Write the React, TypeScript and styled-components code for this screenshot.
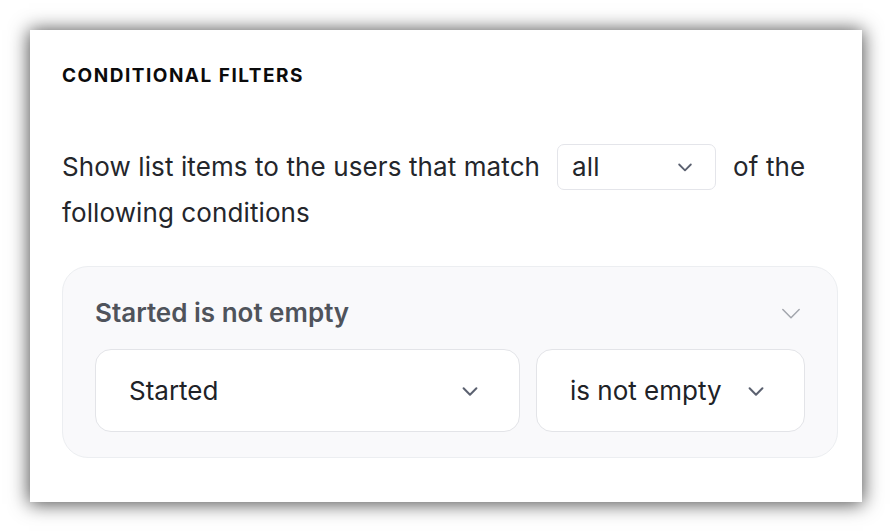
import React from "react";
import styled, { createGlobalStyle } from "styled-components";

const Global = createGlobalStyle`
  html, body { margin: 0; padding: 0; background: #ffffff; }
  body {
    font-family: Inter, "Noto Sans", sans-serif;
    -webkit-font-smoothing: antialiased;
  }
`;

const Page = styled.div`
  padding: 30px;
  width: 892px;
  height: 532px;
  box-sizing: border-box;
`;

const Card = styled.section`
  width: 832px;
  height: 472px;
  box-sizing: border-box;
  background: #ffffff;
  box-shadow: 0 1px 18px 1px rgba(0, 0, 0, 0.7);
  padding: 32px 24px 0 32px;
`;

const Title = styled.h2`
  margin: 0;
  font-size: 19px;
  line-height: 28px;
  font-weight: 700;
  letter-spacing: 1.5px;
  color: #0b0b0c;
`;

const Sentence = styled.div`
  margin-top: 54px;
  font-size: 26px;
  line-height: 46px;
  letter-spacing: 0.1px;
  color: #24262b;
  width: 770px;
`;

const InlineSelect = styled.span`
  display: inline-flex;
  align-items: center;
  justify-content: space-between;
  box-sizing: border-box;
  width: 159px;
  height: 46px;
  padding: 0 20px 0 14px;
  margin: -6px 17px -6px 17px;
  vertical-align: middle;
  border: 1.5px solid #e4e5ea;
  border-radius: 7px;
  background: #ffffff;
  line-height: 1;
  position: relative;
  top: -2px;
`;

const Group = styled.div`
  margin-top: 30px;
  width: 776px;
  box-sizing: border-box;
  background: #f9f9fb;
  border: 1.5px solid #eceef1;
  border-radius: 26px;
  padding: 26px 32px 25px 32px;
`;

const GroupHeader = styled.div`
  display: flex;
  align-items: center;
  justify-content: space-between;
  height: 39px;
  margin-bottom: 17px;
`;

const GroupTitle = styled.span`
  font-size: 26px;
  font-weight: 600;
  color: #4f535b;
`;

const Row = styled.div`
  display: flex;
  gap: 16px;
`;

const Select = styled.div<{ $w: number; $gap?: number }>`
  display: flex;
  align-items: center;
  justify-content: ${(p) => (p.$gap ? "flex-start" : "space-between")};
  gap: ${(p) => (p.$gap ? `${p.$gap}px` : "0")};
  box-sizing: border-box;
  width: ${(p) => p.$w}px;
  height: 83px;
  padding: 0 38px 0 33px;
  background: #ffffff;
  border: 1.5px solid #e3e4e8;
  border-radius: 16px;
  font-size: 26px;
  color: #202227;
  white-space: nowrap;
  svg { flex-shrink: 0; }
`;

const Chevron = ({ size = 20, color = "#5b6170", width = 2.2 }: { size?: number; color?: string; width?: number }) => (
  <svg width={size} height={size} viewBox="0 0 24 24" fill="none" stroke={color} strokeWidth={width} strokeLinecap="round" strokeLinejoin="round">
    <path d="M5 9l7 7 7-7" />
  </svg>
);

export default function App() {
  return (
    <>
      <Global />
      <Page>
        <Card>
          <Title>CONDITIONAL FILTERS</Title>
          <Sentence>
            Show list items to the users that match
            <InlineSelect>
              <span>all</span>
              <Chevron size={20} />
            </InlineSelect>
            of the following conditions
          </Sentence>
          <Group>
            <GroupHeader>
              <GroupTitle>Started is not empty</GroupTitle>
              <Chevron size={28} color="#a3a6ad" width={1.3} />
            </GroupHeader>
            <Row>
              <Select $w={426}>
                <span>Started</span>
                <Chevron size={22} />
              </Select>
              <Select $w={269} $gap={23}>
                <span>is not empty</span>
                <Chevron size={22} />
              </Select>
            </Row>
          </Group>
        </Card>
      </Page>
    </>
  );
}
